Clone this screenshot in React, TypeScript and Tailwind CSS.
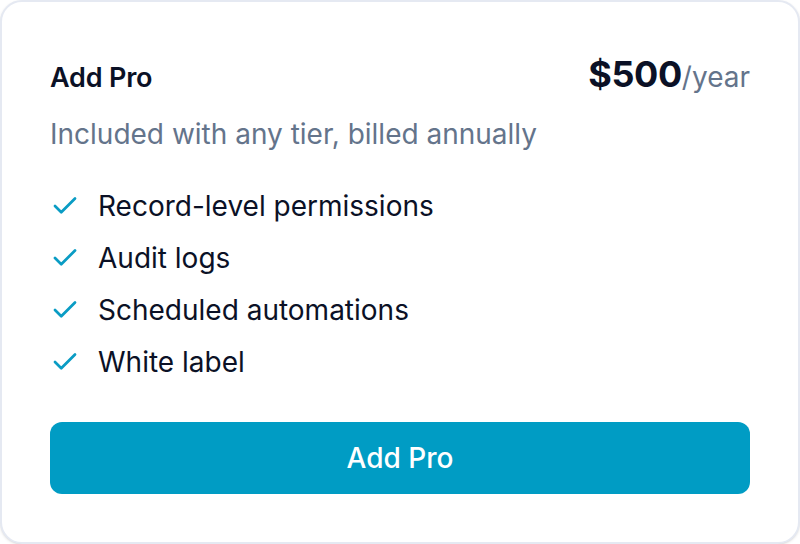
import { Check } from "lucide-react";

const FEATURES = ["Record-level permissions", "Audit logs", "Scheduled automations", "White label"];

export default function App() {
  return (
    <div className="w-[800px] h-[544px] bg-white" style={{ fontFamily: "Inter, 'Noto Sans', sans-serif" }}>
      <div className="h-full w-full rounded-[22px] border-2 border-[#e5e9f2] bg-white px-[48px] pt-[54px] shadow-sm flex flex-col">
        <div className="flex items-baseline justify-between leading-[36px]">
          <div className="text-[27px] font-semibold text-[#0b1126] tracking-[-0.2px]">Add Pro</div>
          <div className="flex items-baseline">
            <span className="text-[36px] font-bold text-[#0b1126] tracking-[-0.4px]">$500</span>
            <span className="text-[28px] text-[#64748b]">/year</span>
          </div>
        </div>
        <div className="mt-[20px] text-[28px] leading-[36px] text-[#64748b]">Included with any tier, billed annually</div>
        <ul className="mt-[36px] flex flex-col gap-[16px]">
          {FEATURES.map((f) => (
            <li key={f} className="flex items-center gap-[18px] h-[36px]">
              <Check className="w-[30px] h-[30px] text-[#0a9cc4]" strokeWidth={2.2} />
              <span className="text-[28px] leading-[36px] text-[#0b1126]">{f}</span>
            </li>
          ))}
        </ul>
        <button className="mt-[42px] h-[72px] w-full rounded-[12px] bg-[#009cc4] text-white text-[28px] font-medium">Add Pro</button>
      </div>
    </div>
  );
}
